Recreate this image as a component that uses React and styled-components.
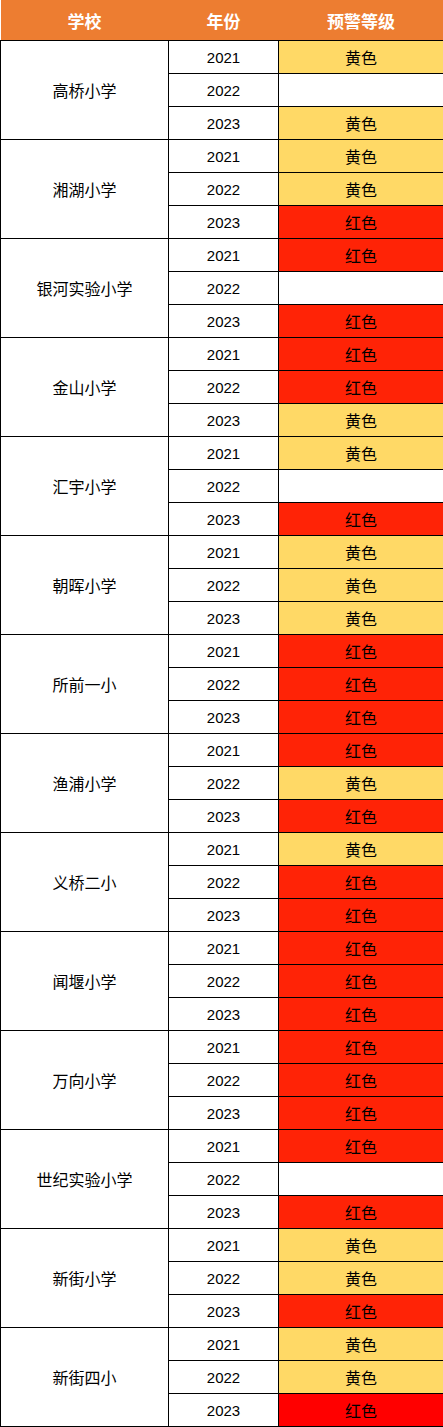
import React from 'react';
import styled, { createGlobalStyle } from 'styled-components';

const GlobalStyle = createGlobalStyle`
  html, body {
    margin: 0;
    padding: 0;
    background: #fff;
  }
  body {
    font-family: "Noto Sans CJK SC", "Noto Sans", sans-serif;
  }
`;

const COLORS = {
  yellow: '#FFD966',
  red: '#FF2306',
  deep: '#FF0000',
  none: '#FFFFFF',
};

const LABELS = {
  yellow: '黄色',
  red: '红色',
  deep: '红色',
  none: '',
};

const schools = [
  ['高桥小学', ['yellow', 'none', 'yellow']],
  ['湘湖小学', ['yellow', 'yellow', 'red']],
  ['银河实验小学', ['red', 'none', 'red']],
  ['金山小学', ['red', 'red', 'yellow']],
  ['汇宇小学', ['yellow', 'none', 'red']],
  ['朝晖小学', ['yellow', 'yellow', 'yellow']],
  ['所前一小', ['red', 'red', 'red']],
  ['渔浦小学', ['red', 'yellow', 'red']],
  ['义桥二小', ['yellow', 'red', 'red']],
  ['闻堰小学', ['red', 'red', 'red']],
  ['万向小学', ['red', 'red', 'red']],
  ['世纪实验小学', ['red', 'none', 'red']],
  ['新街小学', ['yellow', 'yellow', 'red']],
  ['新街四小', ['yellow', 'yellow', 'deep']],
];

const years = ['2021', '2022', '2023'];

const Table = styled.table`
  width: 443px;
  table-layout: fixed;
  border-collapse: collapse;
  color: #000;
`;

const HeadCell = styled.th`
  height: 40px;
  padding: 0;
  background: #ED7D31;
  color: #fff;
  font-size: 17px;
  font-weight: 700;
  text-align: center;
  vertical-align: middle;
  border: none;
`;

const Row = styled.tr`
  height: 33px;
`;

const Cell = styled.td`
  padding: 0;
  border: 1px solid #000;
  text-align: center;
  vertical-align: middle;
  font-size: 16px;
  line-height: 1;
  background: ${(p) => p.$bg || '#fff'};
`;

const YearCell = styled(Cell)`
  font-family: "Liberation Sans", "Noto Sans", sans-serif;
  font-size: 15px;
`;

const App = () => {
  return (
    <>
      <GlobalStyle />
      <Table>
        <colgroup>
          <col style={{ width: 168 }} />
          <col style={{ width: 110 }} />
          <col style={{ width: 165 }} />
        </colgroup>
        <thead>
          <tr>
            <HeadCell>学校</HeadCell>
            <HeadCell>年份</HeadCell>
            <HeadCell>预警等级</HeadCell>
          </tr>
        </thead>
        <tbody>
          {schools.map(([name, levels]) =>
            levels.map((lv, i) => (
              <Row key={name + i}>
                {i === 0 && <Cell rowSpan={3}>{name}</Cell>}
                <YearCell>{years[i]}</YearCell>
                <Cell $bg={COLORS[lv]}>{LABELS[lv]}</Cell>
              </Row>
            ))
          )}
        </tbody>
      </Table>
    </>
  );
};

export default App;
